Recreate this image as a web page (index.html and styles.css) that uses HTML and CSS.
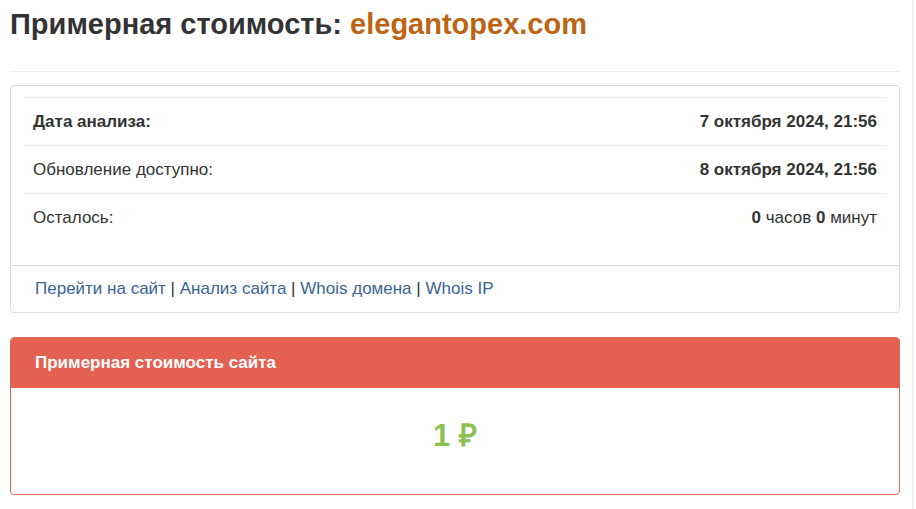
FILE: index.html
```html
<!DOCTYPE html>
<html lang="ru">
<head>
<meta charset="utf-8">
<title>Примерная стоимость: elegantopex.com</title>
<link rel="stylesheet" href="styles.css">
</head>
<body>
<div class="page">
  <h1 class="title">Примерная стоимость: <span class="domain">elegantopex.com</span></h1>
  <hr class="rule">
  <div class="panel info">
    <div class="panel-body">
      <table class="info-table">
        <tr><th>Дата анализа:</th><td><b>7 октября 2024, 21:56</b></td></tr>
        <tr><td>Обновление доступно:</td><td><b>8 октября 2024, 21:56</b></td></tr>
        <tr><td>Осталось:</td><td><b>0</b> часов <b>0</b> минут</td></tr>
      </table>
    </div>
    <div class="panel-footer">
      <a href="#">Перейти на сайт</a> | <a href="#">Анализ сайта</a> | <a href="#">Whois домена</a> | <a href="#">Whois IP</a>
    </div>
  </div>
  <div class="panel cost">
    <div class="cost-head">Примерная стоимость сайта</div>
    <div class="cost-body"><span class="price">1 ₽</span></div>
  </div>
</div>
</body>
</html>
```
FILE: styles.css
```css
html, body {
  margin: 0;
  padding: 0;
  background: #fff;
}
body {
  font-family: "Liberation Sans", Arial, sans-serif;
  color: #333;
  font-size: 17px;
  line-height: 1.42857;
}
.page {
  width: 890px;
  min-height: 509px;
  padding: 0 12px 0 10px;
  border-right: 1px solid #ebebeb;
  box-sizing: content-box;
}
.title {
  margin: 0;
  padding-top: 6px;
  font-size: 29px;
  font-weight: bold;
  line-height: 36px;
  color: #333;
}
.domain {
  color: #bd6414;
}
.rule {
  margin: 29px 0 13px;
  border: 0;
  border-top: 1px solid #eee;
}
.panel {
  border: 1px solid #ddd;
  border-radius: 4px;
  background: #fff;
}
.panel-body {
  padding: 11px 12px 24px 13px;
}
.info-table {
  width: 100%;
  border-collapse: collapse;
}
.info-table th,
.info-table td {
  border-top: 1px solid #eee;
  padding: 12px 10px 12px 9px;
  text-align: left;
  font-weight: normal;
  font-size: 17px;
  line-height: 23px;
}
.info-table th {
  font-weight: bold;
}
.info-table td:last-child {
  text-align: right;
}
.panel-footer {
  border-top: 1px solid #ddd;
  padding: 11px 24px 12px;
  line-height: 23px;
}
.panel-footer a {
  color: #3a6496;
  text-decoration: none;
}
.cost {
  margin-top: 24px;
  border-color: #d9675a;
}
.cost-head {
  background: #e46152;
  color: #fff;
  font-weight: bold;
  font-size: 17px;
  padding: 13px 24px 14px;
  line-height: 23px;
  border-radius: 3px 3px 0 0;
}
.cost-body {
  display: flex;
  justify-content: center;
  padding: 28px 0 38px;
}
.price {
  color: #8cc152;
  font-weight: bold;
  font-size: 31px;
  line-height: 40px;
}
```
